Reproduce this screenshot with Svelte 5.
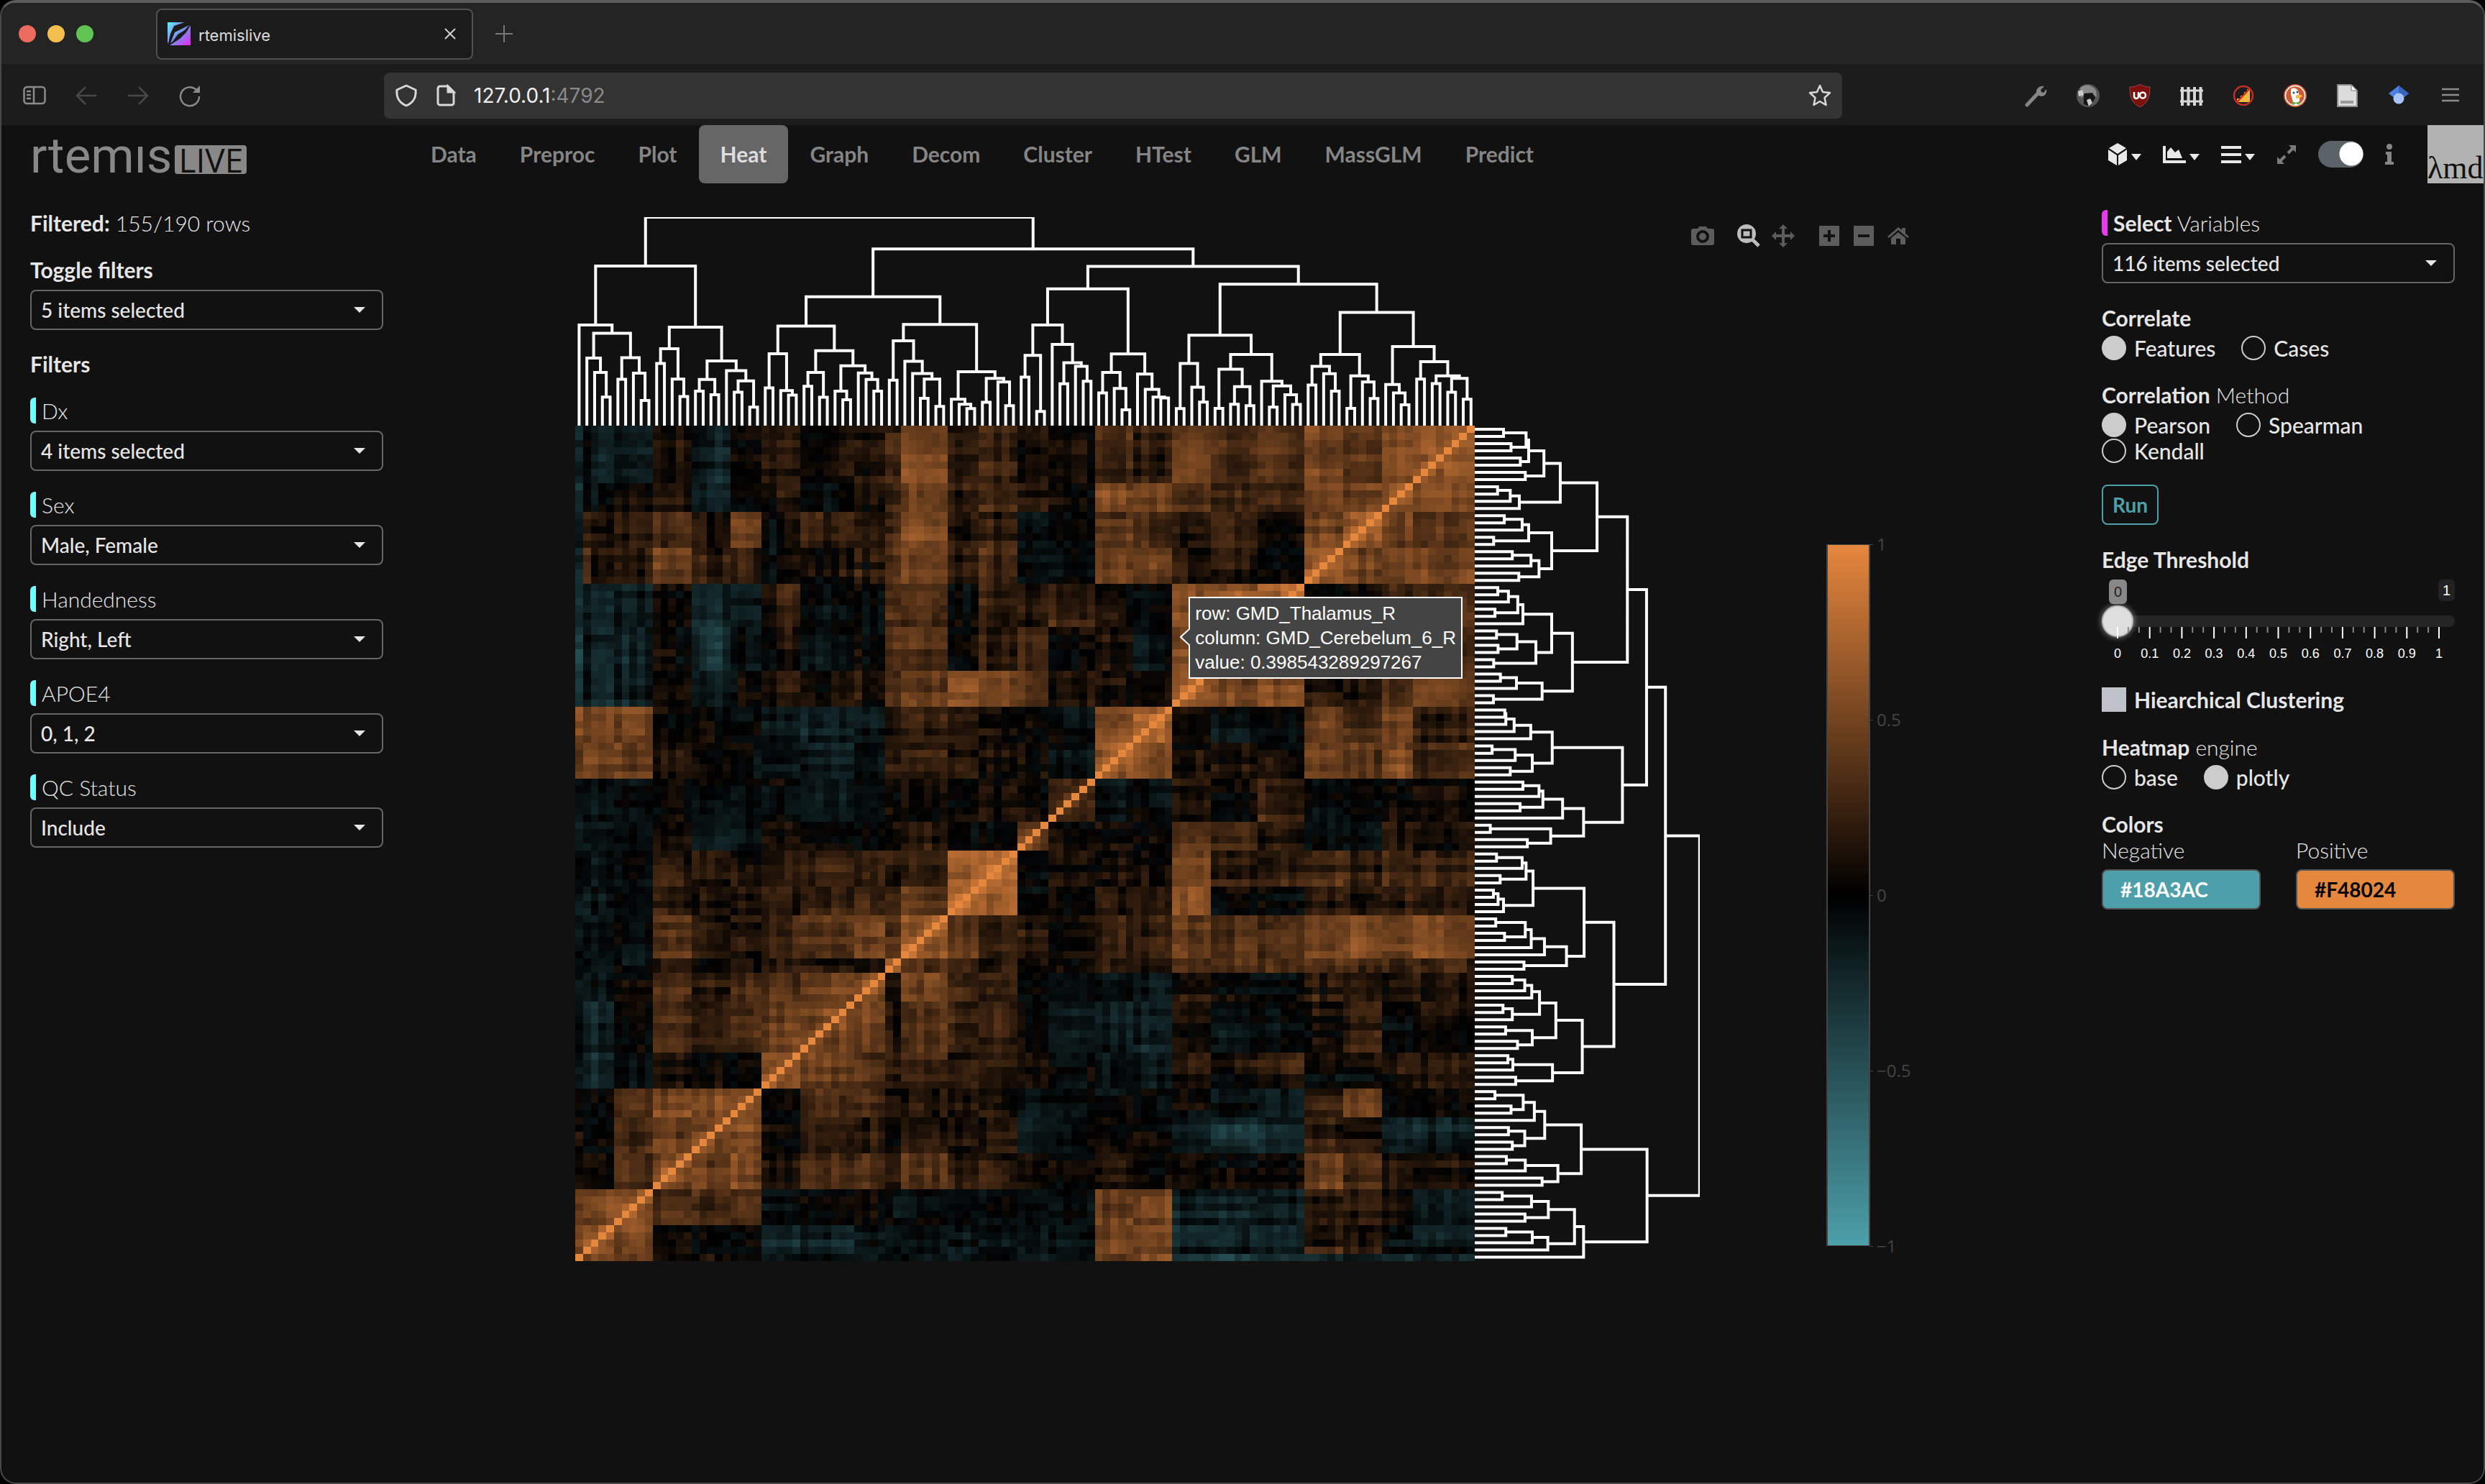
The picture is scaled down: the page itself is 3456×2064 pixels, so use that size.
<script>
  const navItems = ['Data', 'Preproc', 'Plot', 'Heat', 'Graph', 'Decom', 'Cluster', 'HTest', 'GLM', 'MassGLM', 'Predict'];
  let activeTab = $state('Heat');

  const filters = [
    { id: 'dx', label: 'Dx', value: '4 items selected' },
    { id: 'sex', label: 'Sex', value: 'Male, Female' },
    { id: 'hand', label: 'Handedness', value: 'Right, Left' },
    { id: 'apoe4', label: 'APOE4', value: '0, 1, 2' },
    { id: 'qc', label: 'QC Status', value: 'Include' },
  ];

  let correlate = $state('Features');
  let method = $state('Pearson');
  let engine = $state('plotly');
  let threshold = $state(0);
  let clustering = $state(true);
  let negative = $state('#18A3AC');
  let positive = $state('#F48024');

  const colorTicks = ['1', '0.5', '0', '−0.5', '−1'];
  const sliderTicks = Array.from({ length: 31 }, (_, i) => i);

  // Dendrogram: [height, left, right], 0 is a leaf. p() is a pair of leaves.
  const p = (h) => [h, 0, 0];
  const treeA = [665,
    [420, 0, [385,
      [282, 0, [222, 0, p(120)]],
      [284, p(194), [219, 0, p(106)]]]],
    [411,
      [321, p(260), [195, 0, p(122)]],
      [270, [193, p(145), p(130)], [230, 0, [187, p(140), p(78)]]]]];
  const treeC = [537,
    [415,
      [300, p(158), [147, 0, p(128)]],
      [313,
        [222, p(165), p(119)],
        [250, [145, 0, p(109)], [220, 0, [193, 0, p(145)]]]]],
    [422,
      [354, p(190), [269, 0, [218, 0, [195, p(115), p(81)]]]],
      [225, [111, 0, [90, 0, p(72)]], [198, p(98), [183, 0, p(84)]]]]];
  const treeD = [663,
    [570,
      [420, [293, p(203), p(60)], [339, 0, [263, p(175), [248, 0, p(186)]]]],
      [299, [222, p(137), [156, 0, p(67)]], [216, 0, [152, 0, [120, 0, p(116)]]]]],
    [589,
      [377,
        [260, p(72), [161, 0, p(99)]],
        [297,
          [236, p(73), [163, p(90), p(84)]],
          [186, 0, [166, p(78), [130, 0, p(89)]]]]],
      [472,
        [297, [248, p(170), [217, 0, p(145)]], [208, p(73), [183, 0, p(114)]]],
        [330,
          [172, 0, [137, 0, p(88)]],
          [267, p(195), [208, p(176), [198, p(140), p(111)]]]]]]];
  const tree = [868, treeA, [736, treeC, treeD]];
  const rootHeight = 868;
  const n = 116;

  function links(root) {
    const out = [];
    let leaf = 0;
    function walk(node) {
      if (node === 0) {
        leaf += 1;
        return { pos: leaf - 0.5, h: 0 };
      }
      const a = walk(node[1]);
      const b = walk(node[2]);
      out.push({ h: node[0], a, b });
      return { pos: (a.pos + b.pos) / 2, h: node[0] };
    }
    walk(root);
    return out;
  }

  const joins = links(tree);
  const colPath = joins
    .map(({ h, a, b }) => `M${a.pos} ${rootHeight - a.h}V${rootHeight - h}H${b.pos}V${rootHeight - b.h}`)
    .join('');
  const rowPath = joins
    .map(({ h, a, b }) => `M${a.h} ${n - a.pos}H${h}V${n - b.pos}H${b.h}`)
    .join('');

  // Mean correlation (x100) between groups of variables, upper triangle
  const bounds = [0, 1, 5, 10, 15, 20, 24, 29, 36, 40, 42, 48, 52, 57, 61, 67, 72, 77, 82, 88, 94, 99, 104, 108, 116];
  const means = [
    [60, 55, 50, 8, 0, 5, -12, -15, -12, -12, -15, -15, -12, -8, -10, 45, 50, -38, -38, -40, -20, -20, -28, -34],
    [60, 52, 0, -5, -5, -25, -22, -15, -8, -10, -14, -14, -10, -10, 45, 50, -28, -28, -30, 10, 5, -5, -18],
    [60, 30, 28, 28, -12, 2, 0, -5, -5, -5, -6, -4, -8, 42, 48, -15, -16, -18, 18, 15, 8, -12],
    [52, 45, 50, 12, 30, 33, 20, 36, 16, 18, 5, 0, 8, 5, 3, 0, 0, 38, 32, 12, 10],
    [55, 55, 0, 15, 20, 8, 13, 12, 15, -18, -2, 2, 5, -8, -26, -20, 18, 18, -12, -15],
    [58, 2, 30, 28, 10, 12, 10, 10, -12, -5, -4, -5, -5, -18, -18, 22, 38, -4, -6],
    [50, 42, 35, 12, 30, 16, 16, 3, -2, -14, -16, 18, 5, 16, 2, 4, 14, 16],
    [50, 50, 14, 38, 24, 22, 2, -10, -18, -20, 10, -8, -8, 10, 24, 2, 4],
    [58, 16, 44, 27, 24, 0, -8, -16, -18, 10, -4, -8, 12, 14, 5, 6],
    [60, 38, 16, 16, 8, 6, 12, 12, 36, 34, 30, 30, 28, 30, 32],
    [62, 38, 28, 14, 2, 16, 18, 42, 32, 32, 54, 54, 48, 50],
    [76, 68, 0, 5, 8, 6, 52, 0, -2, 16, 14, 16, 19],
    [76, 3, 8, 10, 6, 50, 12, 22, 26, 14, 24, 24],
    [36, 0, 3, 3, 33, 36, 14, -6, -4, 8, 12],
    [26, -8, -5, 12, 4, 26, -3, -3, 5, 8],
    [64, 58, 8, 10, 3, 44, 38, 52, 30],
    [66, 2, -8, -6, 42, 30, 44, 18],
    [64, 50, 50, 12, 14, 35, 42],
    [58, 60, 14, 20, 28, 30],
    [70, 2, 5, 26, 38],
    [58, 48, 52, 45],
    [64, 46, 44],
    [62, 56],
    [58],
  ];

  // Variables that stand out from their group against the last two clusters
  const bias = {
    1: 0.2, 2: -0.04, 5: 0.08, 6: -0.08, 10: 0.1, 17: -0.1, 18: -0.1, 21: 0.08,
    24: -0.05, 25: -0.1, 26: 0.05, 27: 0.08, 28: 0.05, 31: -0.08, 32: -0.08, 36: 0.08, 37: -0.06,
    52: 0.08, 53: 0.06,
  };

  function groupOf(i) {
    let g = 0;
    while (bounds[g + 1] <= i) g += 1;
    return g;
  }

  // Repeatable noise in -1..1
  function noise(a, b) {
    const s = Math.sin(a * 127.1 + b * 311.7) * 43758.5453;
    return (s - Math.floor(s)) * 2 - 1;
  }

  function corr(i, j) {
    if (i === j) return 1;
    const a = Math.min(i, j);
    const b = Math.max(i, j);
    const ga = groupOf(a);
    const gb = groupOf(b);
    let v = means[ga][gb - ga] / 100;
    v += 0.09 * noise(a, 200 + gb) + 0.09 * noise(b, 400 + ga) + 0.05 * noise(a, b + 7);
    if (b >= 77) v += bias[a] || 0;
    if (ga === gb && b - a < 2) v += 0.08;
    if (v < 0) v *= 0.85;
    return Math.max(-1, Math.min(0.92, v));
  }

  const low = [77, 160, 170];
  const high = [230, 135, 62];
  let canvas;

  $effect(() => {
    const ctx = canvas.getContext('2d');
    const img = ctx.createImageData(n, n);
    for (let row = 0; row < n; row++) {
      for (let col = 0; col < n; col++) {
        const v = corr(n - 1 - row, col);
        const c = v < 0 ? low : high;
        const k = (row * n + col) * 4;
        for (let ch = 0; ch < 3; ch++) img.data[k + ch] = c[ch] * Math.abs(v);
        img.data[k + 3] = 255;
      }
    }
    ctx.putImageData(img, 0, 0);
  });
</script>

{#snippet dropdown(id, value)}
  <div class="select-wrap">
    <select {id}><option>{value}</option></select>
    <svg class="select-caret" viewBox="0 0 16 8"><path d="M0 0h16L8 8z" /></svg>
  </div>
{/snippet}

{#snippet caret()}
  <svg class="menu-caret" viewBox="0 0 14 9"><path d="M0 0h14L7 9z" /></svg>
{/snippet}

<div class="window">
  <!-- Tab strip -->
  <div class="tabs">
    <div class="lights"><span class="red"></span><span class="yellow"></span><span class="green"></span></div>
    <div class="tab">
      <svg class="icon" viewBox="0 0 32 32">
        <defs>
          <linearGradient id="fav" x1="0" y1="0" x2="1" y2="1">
            <stop offset="0" stop-color="#5ff5f8" />
            <stop offset="0.5" stop-color="#7c8cf0" />
            <stop offset="1" stop-color="#ee22f4" />
          </linearGradient>
        </defs>
        <path d="M0 0h24L9 5 4 16 1 30 0 27z" fill="url(#fav)" />
        <path d="M30 4L10 14 4 29 16 20z" fill="url(#fav)" />
        <path d="M27 9L14 17 7 27 19 19z" fill="#1b1b1b" />
        <path d="M32 4v28H3l14-9 9-9z" fill="url(#fav)" />
      </svg>
      <span class="tab-title">rtemislive</span>
      <button class="bare" aria-label="Close tab">
        <svg width="16" height="16" viewBox="0 0 16 16"><path d="M1 1l14 14M15 1L1 15" stroke="#d0d0d0" stroke-width="2" /></svg>
      </button>
    </div>
    <button class="bare new-tab" aria-label="New tab">
      <svg width="24" height="24" viewBox="0 0 24 24"><path d="M12 0v24M0 12h24" stroke="#777" stroke-width="2" /></svg>
    </button>
  </div>

  <!-- Address bar -->
  <div class="toolbar">
    <div class="history">
      <svg class="icon" viewBox="0 0 32 32" fill="none" stroke="#8a8a8a" stroke-width="2.5">
        <rect x="1.5" y="4" width="29" height="23" rx="4" /><path d="M15 4v23M5 10h6M5 15h6M5 20h6" />
      </svg>
      <svg class="icon" viewBox="0 0 32 32" fill="none" stroke="#484848" stroke-width="2.5"><path d="M30 16H3M15 4L3 16l12 12" /></svg>
      <svg class="icon" viewBox="0 0 32 32" fill="none" stroke="#484848" stroke-width="2.5"><path d="M2 16h27M17 4l12 12-12 12" /></svg>
      <svg class="icon" viewBox="0 0 32 32" fill="none" stroke="#8a8a8a" stroke-width="2.5">
        <path d="M29 17a13 13 0 1 1-5-10l3 3" /><path d="M30 2v10H20z" fill="#8a8a8a" stroke="none" />
      </svg>
    </div>
    <div class="address">
      <svg class="icon" viewBox="0 0 32 32" fill="none" stroke="#d8d8d8" stroke-width="3">
        <path d="M16 2L29 8c1 10-2 17-13 22C5 25 2 18 3 8z" stroke-linejoin="round" />
      </svg>
      <svg class="icon" viewBox="0 0 32 32" fill="none" stroke="#d8d8d8" stroke-width="3">
        <path d="M8 3h11l8 8v15a3 3 0 0 1-3 3H8a3 3 0 0 1-3-3V6a3 3 0 0 1 3-3z" /><path d="M19 3v8h8z" fill="#d8d8d8" />
      </svg>
      <span class="url">127.0.0.1<span class="port">:4792</span></span>
      <svg class="icon" viewBox="0 0 32 32" fill="none" stroke="#d8d8d8" stroke-width="2.5" stroke-linejoin="round">
        <path d="M16 2l4 9 10 1-7.500 7 2 10L16 24l-8.500 5 2-10L2 12l10-1z" />
      </svg>
    </div>
    <div class="extensions">
      <svg class="icon" viewBox="0 0 32 32">
        <path d="M3 29L18 13" stroke="#858585" stroke-width="5" stroke-linecap="round" />
        <path d="M27 3l-5 5 1 3 3 1 4-5c1 5-1 9-6 10-5 0-8-3-8-7 1-5 5-8 11-7z" fill="#858585" />
      </svg>
      <svg class="icon" viewBox="0 0 32 32">
        <circle cx="16" cy="16" r="16" fill="#555" />
        <path d="M5 5c7-6 17-4 22 4l1 9-7-5-10 2-5 5z" fill="#8a8a8a" />
        <path d="M10 13l12-1 4 7-7 12-9-3z" fill="#161616" />
        <path d="M2 10l6-2 2 7-7 2zM14 22l5-2 3 6-5 5z" fill="#ccc" />
      </svg>
      <svg class="icon" viewBox="0 0 32 32">
        <path d="M16 0c5 3 9 4 14 4 0 15-3 22-14 28C5 26 2 19 2 4c5 0 9-1 14-4z" fill="#7d0f0d" stroke="#9a4a48" />
        <path d="M8 11v6a3 3 0 0 0 6 0v-6" fill="none" stroke="#fff" stroke-width="2.5" />
        <circle cx="20" cy="15.5" r="4" fill="none" stroke="#fff" stroke-width="2.5" />
      </svg>
      <svg class="icon" viewBox="0 0 32 32" stroke="#d6d6d6" fill="none">
        <path d="M3 4v26M11.500 4v26M20 4v26M28.500 4v26" stroke-width="4" /><path d="M0 9h32M0 24h32" stroke-width="3" />
      </svg>
      <svg class="icon" viewBox="0 0 32 32">
        <path d="M7 25v-5h5v-4h5v-5h4V7h4v18z" fill="#f2b840" />
        <circle cx="16" cy="16" r="13" fill="none" stroke="#c22e22" stroke-width="2.5" />
        <path d="M25 6L7 25" stroke="#c22e22" stroke-width="2.5" />
      </svg>
      <svg class="icon" viewBox="0 0 32 32">
        <circle cx="16" cy="16" r="16" fill="#ce5a35" /><circle cx="16" cy="16" r="13.5" fill="none" stroke="#fff" stroke-width="1.5" />
        <path d="M10 7c4-3 10-1 11 5l1 8v9c-4 1-7 0-8-1L10 14z" fill="#fff" />
        <path d="M17 16c4-2 7-1 9 0-1 3-5 4-9 4z" fill="#f3bc3e" />
        <circle cx="14" cy="12" r="1.5" fill="#2b4f7b" /><circle cx="19" cy="11" r="1.5" fill="#2b4f7b" />
        <path d="M12 24l5 2 5-2v5l-5-2-5 2z" fill="#5fae46" />
      </svg>
      <svg class="icon" viewBox="0 0 32 32">
        <path d="M3 1h19l8 8v22H3z" fill="#dcdcdc" stroke="#8b8b8b" stroke-width="2" />
        <path d="M22 1l8 8h-8z" fill="#fff" stroke="#777" /><path d="M7 23h18v4H7z" fill="#9a9a9a" />
      </svg>
      <svg class="icon" viewBox="0 0 32 32">
        <path d="M16 2L30 13 16 24 2 13z" fill="#4c7fe0" /><path d="M16 2L30 13 16 20z" fill="#3563bd" />
        <circle cx="16" cy="20" r="7.5" fill="#a8c5fb" />
      </svg>
      <svg class="icon" viewBox="0 0 32 32" stroke="#8a8a8a" stroke-width="2.5"><path d="M4 7h24M4 15h24M4 23h24" /></svg>
    </div>
  </div>

  <!-- App navbar -->
  <header class="navbar">
    <a class="logo" href="#home">rtemıs<span>LIVE</span></a>
    <nav>
      {#each navItems as item}
        <a href="#{item}" class:active={item === activeTab} onclick={() => (activeTab = item)}>{item}</a>
      {/each}
    </nav>
    <div class="menus">
      <button class="bare" aria-label="Models">
        <svg width="28" height="32" viewBox="0 0 28 32" fill="#e8e8e8">
          <path d="M14 0l12 7-12 8L2 7z" /><path d="M1 9l12 8v14L1 24zM27 9l-12 8v14l12-7z" />
        </svg>
        {@render caret()}
      </button>
      <button class="bare" aria-label="Charts">
        <svg width="32" height="26" viewBox="0 0 32 26" fill="#e8e8e8">
          <path d="M0 1h4v20h28v4H0z" /><path d="M6 18v-9l5-6 6 7 5-4 5 12z" />
        </svg>
        {@render caret()}
      </button>
      <button class="bare" aria-label="Menu">
        <svg width="28" height="26" viewBox="0 0 28 26" stroke="#e8e8e8" stroke-width="4"><path d="M0 3h28M0 13h28M0 23h28" /></svg>
        {@render caret()}
      </button>
      <svg width="28" height="28" viewBox="0 0 28 28" fill="#7c7c7c" stroke="#7c7c7c" stroke-width="4">
        <path d="M16 12l7-7M12 16l-7 7" /><path d="M17 1h10v10zM1 17v10h10z" stroke="none" />
      </svg>
      <input class="theme-switch" type="checkbox" checked aria-label="Dark theme" />
      <svg class="info" width="12" height="30" viewBox="0 0 12 30" fill="#858585">
        <circle cx="6" cy="4" r="4" /><path d="M1 11h8v14h3v4H0v-4h3V15H1z" />
      </svg>
      <a class="brand" href="#lambdamd">λmd</a>
    </div>
  </header>

  <main>
    <aside class="panel">
      <p class="line"><b>Filtered:</b> 155/190 rows</p>
      <div class="field">
        <label class="line" for="toggle"><b>Toggle filters</b></label>
        {@render dropdown('toggle', '5 items selected')}
      </div>
      <h2 class="line">Filters</h2>
      {#each filters as f}
        <div class="field">
          <label class="line marked" for={f.id}>{f.label}</label>
          {@render dropdown(f.id, f.value)}
        </div>
      {/each}
    </aside>

    <section class="chart">
      <div class="clustergram">
        <svg class="dendrogram" viewBox="0 0 {n} {rootHeight}" preserveAspectRatio="none"><path d={colPath} /></svg>
        <div class="heatmap">
          <canvas bind:this={canvas} width={n} height={n}></canvas>
          <div class="tooltip">row: GMD_Thalamus_R<br />column: GMD_Cerebelum_6_R<br />value: 0.398543289297267
            <svg class="pointer" viewBox="0 0 14 24"><path d="M14 0L1 12l13 12" /></svg>
          </div>
        </div>
        <svg class="dendrogram rows" viewBox="0 0 {rootHeight} {n}" preserveAspectRatio="none"><path d={rowPath} /></svg>
      </div>

      <div class="legend">
        <div class="colorbar"></div>
        <div class="color-ticks">
          {#each colorTicks as t}<span>{t}</span>{/each}
        </div>
      </div>

      <div class="modebar">
        <button class="bare" aria-label="Download plot">
          <svg class="icon" viewBox="0 0 32 32" fill="#5c5c5c" fill-rule="evenodd">
            <path d="M3 6h6l2-3h10l2 3h6a3 3 0 0 1 3 3v17a3 3 0 0 1-3 3H3a3 3 0 0 1-3-3V9a3 3 0 0 1 3-3zM16 8a9 9 0 1 0 0 18 9 9 0 0 0 0-18zM16 12a5 5 0 1 1 0 10 5 5 0 0 1 0-10z" />
          </svg>
        </button>
        <div class="mode-group">
          <button class="bare" aria-label="Zoom">
            <svg class="icon" viewBox="0 0 32 32">
              <path d="M21 21l9 9" stroke="#bdbdbd" stroke-width="5" /><circle cx="13" cy="13" r="13" fill="#bdbdbd" />
              <path d="M7 8h12v10H7z" fill="none" stroke="#111" stroke-width="3" />
            </svg>
          </button>
          <button class="bare" aria-label="Pan">
            <svg class="icon" viewBox="0 0 32 32" fill="#5c5c5c">
              <path d="M16 0l6 6h-4v8h8v-4l6 6-6 6v-4h-8v8h4l-6 6-6-6h4v-8H6v4l-6-6 6-6v4h8V6h-4z" />
            </svg>
          </button>
        </div>
        <div class="mode-group">
          <button class="bare" aria-label="Zoom in">
            <svg class="icon" viewBox="0 0 32 32"><path d="M2 2h28v28H2z" fill="#5c5c5c" /><path d="M16 8v16M8 16h16" stroke="#111" stroke-width="4" /></svg>
          </button>
          <button class="bare" aria-label="Zoom out">
            <svg class="icon" viewBox="0 0 32 32"><path d="M2 2h28v28H2z" fill="#5c5c5c" /><path d="M8 16h16" stroke="#111" stroke-width="4" /></svg>
          </button>
          <button class="bare" aria-label="Reset axes">
            <svg class="icon" viewBox="0 0 32 32" fill="#5c5c5c">
              <path d="M16 4l5 4V5h5v8l5 4-2 2-13-11L3 19l-2-2z" /><path d="M16 11l10 8v9h-7v-8h-6v8H6v-9z" />
            </svg>
          </button>
        </div>
      </div>
    </section>

    <aside class="panel controls">
      <div class="field">
        <label class="line marked pink" for="vars"><b>Select</b> Variables</label>
        {@render dropdown('vars', '116 items selected')}
      </div>

      <fieldset>
        <legend class="line"><b>Correlate</b></legend>
        <div class="options">
          {#each ['Features', 'Cases'] as o}
            <label><input type="radio" name="correlate" value={o} bind:group={correlate} />{o}</label>
          {/each}
        </div>
      </fieldset>

      <fieldset>
        <legend class="line"><b>Correlation</b> Method</legend>
        <div class="options">
          {#each ['Pearson', 'Spearman', 'Kendall'] as o}
            <label><input type="radio" name="method" value={o} bind:group={method} />{o}</label>
          {/each}
        </div>
      </fieldset>

      <button class="run">Run</button>

      <div class="slider">
        <label class="line" for="threshold"><b>Edge Threshold</b></label>
        <div class="slider-badges"><span class="current">{threshold}</span><span>1</span></div>
        <input id="threshold" type="range" min="0" max="1" step="0.01" bind:value={threshold} />
        <svg class="slider-ticks">
          {#each sliderTicks as t}
            <line class:major={t % 3 === 0} x1="{t / 0.3}%" x2="{t / 0.3}%" y1="0" y2={t % 3 ? 8 : 16} />
            {#if t % 3 === 0}<text x="{t / 0.3}%" y="43">{t / 30}</text>{/if}
          {/each}
        </svg>
      </div>

      <label class="check"><input type="checkbox" bind:checked={clustering} /><b>Hiearchical Clustering</b></label>

      <fieldset>
        <legend class="line"><b>Heatmap</b> engine</legend>
        <div class="options">
          {#each ['base', 'plotly'] as o}
            <label><input type="radio" name="engine" value={o} bind:group={engine} />{o}</label>
          {/each}
        </div>
      </fieldset>

      <div>
        <h2 class="line">Colors</h2>
        <div class="colors">
          <div class="color">
            <label class="line" for="negative">Negative</label>
            <input id="negative" class="negative" type="text" bind:value={negative} />
          </div>
          <div class="color">
            <label class="line" for="positive">Positive</label>
            <input id="positive" class="positive" type="text" bind:value={positive} />
          </div>
        </div>
      </div>
    </aside>
  </main>
</div>

<style>
  :global(body) {
    background: #000;
  }

  .window {
    box-sizing: border-box;
    min-height: 100vh;
    border: 2px solid #484848;
    border-top: 4px solid #5c5c5c;
    border-radius: 22px;
    overflow: hidden;
    background: #111;
    color: #e6e6e6;
    font: 300 30px/36px Lato, sans-serif;
  }

  b {
    font-weight: 700;
  }

  .bare {
    display: flex;
    align-items: center;
    padding: 0;
    border: 0;
    background: none;
  }

  .icon {
    display: block;
    flex: none;
    width: 32px;
    height: 32px;
  }

  /* Browser chrome */
  .tabs {
    display: flex;
    align-items: center;
    height: 86px;
    background: #242424;
    box-sizing: border-box;
    padding-left: 24px;
    font-family: Inter, sans-serif;
  }

  .lights {
    display: flex;
    gap: 16px;
    margin-right: 87px;
  }

  .lights span {
    width: 24px;
    height: 24px;
    border-radius: 50%;
  }

  .red { background: #ec6a5e; }
  .yellow { background: #f4bf4f; }
  .green { background: #61c554; }

  .tab {
    box-sizing: border-box;
    display: flex;
    align-items: center;
    gap: 11px;
    width: 441px;
    height: 71px;
    padding: 0 22px 0 14px;
    border: 2px solid #505050;
    border-radius: 8px;
    background: #1b1b1b;
  }

  .tab-title {
    flex: 1;
    padding-top: 3px;
    color: #dcdcdc;
    font-size: 22px;
    font-weight: 400;
  }

  .new-tab {
    margin-left: 31px;
  }

  .toolbar {
    display: flex;
    align-items: center;
    height: 84px;
    padding: 0 30px;
    border-top: 1px solid #171717;
    box-sizing: border-box;
    background: #1c1c1c;
  }

  .history {
    display: flex;
    gap: 40px;
    width: 502px;
  }

  .address {
    flex: 1;
    display: flex;
    align-items: center;
    gap: 23px;
    box-sizing: border-box;
    height: 64px;
    max-width: 2028px;
    padding: 0 15px;
    border-radius: 8px;
    background: #333;
  }

  .url {
    flex: 1;
    color: #f0f0f0;
    font: 400 28px/32px Inter, sans-serif;
  }

  .port {
    color: #8a8a8a;
  }

  .extensions {
    display: flex;
    gap: 40px;
    margin-left: auto;
  }

  /* Navbar */
  .navbar {
    display: flex;
    height: 81px;
    padding-left: 40px;
  }

  .logo {
    display: flex;
    align-items: flex-end;
    gap: 4px;
    width: 527px;
    color: #888;
    font: 400 69px/76px Roboto, sans-serif;
    text-decoration: none;
  }

  .logo span {
    margin-bottom: 13px;
    padding: 0 5px;
    border-radius: 4px;
    background: #888;
    color: #111;
    font: 400 46px/40px "Open Sans", sans-serif;
  }

  nav {
    display: flex;
  }

  nav a {
    padding: 22px 30px 23px;
    border-radius: 8px;
    color: #858585;
    font-size: 30px;
    font-weight: 700;
    text-decoration: none;
  }

  nav a.active {
    background: #666;
    color: #ddd;
  }

  .menus {
    display: flex;
    align-items: center;
    gap: 30px;
    margin-left: auto;
  }

  .menus .bare {
    gap: 5px;
  }

  .menu-caret {
    width: 14px;
    height: 9px;
    margin-top: 8px;
    fill: #e8e8e8;
  }

  .theme-switch {
    appearance: none;
    width: 63px;
    height: 37px;
    margin: 0;
    border-radius: 20px;
    background: radial-gradient(circle at 46px 18px, #fff 16px, #5b6268 17px);
  }

  .brand {
    align-self: stretch;
    width: 78px;
    margin-left: 17px;
    background: #b2b2b2;
    color: #111;
    font: 400 44px/120px "Liberation Serif", serif;
    overflow: hidden;
    text-decoration: none;
  }

  /* Page */
  main {
    display: grid;
    grid-template-columns: 491px 1fr 491px;
    padding: 37px 40px 40px 40px;
  }

  .panel {
    display: flex;
    flex-direction: column;
    gap: 29px;
  }

  .line {
    margin: 0;
    padding: 0;
    height: 36px;
    font-size: 30px;
    line-height: 36px;
  }

  h2.line {
    font-weight: 700;
  }

  .field {
    display: flex;
    flex-direction: column;
    gap: 10px;
  }

  .marked {
    padding-left: 8px;
    border-left: 8px solid #74fbfd;
    border-radius: 6px 0 0 6px;
  }

  .pink {
    border-left-color: #e83bf0;
  }

  .select-wrap {
    position: relative;
  }

  select {
    appearance: none;
    display: block;
    box-sizing: border-box;
    width: 100%;
    height: 56px;
    padding: 0 13px;
    border: 2px solid #666;
    border-radius: 8px;
    background: none;
    color: #e6e6e6;
    font: 500 28px/36px Lato, sans-serif;
  }

  .select-caret {
    position: absolute;
    top: 24px;
    right: 25px;
    width: 16px;
    height: 8px;
    fill: #e6e6e6;
  }

  /* Chart */
  .chart {
    position: relative;
    display: flex;
    padding: 10px 200px 0 267px;
  }

  .clustergram {
    flex: 1;
    display: grid;
    grid-template-columns: 4fr 1fr;
    grid-template-rows: 1fr 4fr;
    height: 1452px;
  }

  .dendrogram {
    width: 100%;
    height: 100%;
    min-height: 0;
    overflow: hidden;
  }

  .dendrogram path {
    fill: none;
    stroke: #fff;
    stroke-width: 4;
    vector-effect: non-scaling-stroke;
  }

  .heatmap {
    grid-row: 2;
    position: relative;
    min-height: 0;
  }

  canvas {
    display: block;
    width: 100%;
    height: 100%;
    image-rendering: pixelated;
  }

  .rows {
    grid-row: 2;
  }

  .tooltip {
    position: absolute;
    top: 238px;
    left: 68.2%;
    padding: 4px 7px;
    border: 2px solid #fff;
    background: #444;
    color: #fff;
    font: 400 26px/34px "Liberation Sans", sans-serif;
    white-space: nowrap;
  }

  .pointer {
    position: absolute;
    top: 42px;
    left: -14px;
    width: 14px;
    height: 24px;
    fill: #444;
    stroke: #fff;
    stroke-width: 2;
  }

  .legend {
    display: flex;
    width: 183px;
    height: 976px;
    margin: 455px 0 0 176px;
  }

  .colorbar {
    box-sizing: border-box;
    width: 61px;
    border: 2px solid #444;
    border-width: 1px 2px;
    background: linear-gradient(#e6873e, #000 50%, #4da0aa);
  }

  .color-ticks {
    display: flex;
    flex-direction: column;
    justify-content: space-between;
    margin: -16px 0;
    color: #444;
    font: 400 24px/32px "Open Sans", sans-serif;
  }

  .color-ticks span {
    display: flex;
    align-items: center;
    gap: 5px;
  }

  .color-ticks span::before {
    content: "";
    width: 4px;
    height: 1px;
    background: #444;
  }

  .modebar {
    position: absolute;
    top: 20px;
    right: 267px;
    display: flex;
    gap: 32px;
  }

  .mode-group {
    display: flex;
    gap: 16px;
  }

  /* Controls */
  fieldset {
    margin: 0;
    padding: 0;
    border: 0;
  }

  .controls {
    gap: 30px;
  }

  .options {
    display: flex;
    flex-wrap: wrap;
    gap: 2px 36px;
    padding-top: 7px;
  }

  .options label,
  .check {
    display: flex;
    align-items: center;
    gap: 11px;
    height: 34px;
    font-weight: 500;
  }

  .check {
    height: 36px;
  }

  .options input {
    appearance: none;
    box-sizing: border-box;
    width: 34px;
    height: 34px;
    margin: 0;
    border: 2px solid #ccc;
    border-radius: 50%;
  }

  .options input:checked {
    background: #ccc;
  }

  .run {
    align-self: flex-start;
    height: 56px;
    padding: 0 13px;
    border: 2px solid #4da0aa;
    border-radius: 8px;
    background: none;
    color: #4da0aa;
    font: 700 28px/36px Lato, sans-serif;
  }

  .slider {
    display: flex;
    flex-direction: column;
  }

  .slider-badges {
    display: flex;
    justify-content: space-between;
    align-items: flex-start;
    margin: 10px 0 0 10px;
    font: 400 20px/30px "Liberation Sans", sans-serif;
  }

  .slider-badges span {
    padding: 0 6px;
    border-radius: 6px;
    background: #222;
    color: #fff;
  }

  .slider-badges .current {
    padding: 2px 7px;
    background: #888;
    color: #222;
  }

  .slider input {
    appearance: none;
    width: 100%;
    height: 16px;
    margin: 16px 0 0;
    border-radius: 8px;
    background: #252525;
  }

  .slider input::-webkit-slider-thumb {
    appearance: none;
    width: 44px;
    height: 44px;
    border: 2px solid #bbb;
    border-radius: 50%;
    background: #dedede;
    box-shadow: 0 0 8px #999;
  }

  .slider-ticks {
    height: 53px;
    width: calc(100% - 44px);
    margin: 0 22px;
    overflow: visible;
  }

  .slider-ticks line {
    stroke: #888;
    stroke-width: 2;
  }

  .slider-ticks line.major {
    stroke: #fff;
  }

  .slider-ticks text {
    fill: #fff;
    font: 400 18px "Liberation Sans", sans-serif;
    text-anchor: middle;
  }

  .check input {
    appearance: none;
    width: 34px;
    height: 34px;
    margin: 0;
    border: 2px solid #bfc3c9;
    box-sizing: border-box;
  }

  .check input:checked {
    background: #bfc3c9;
  }

  .colors {
    display: grid;
    grid-template-columns: 1fr 1fr;
    gap: 49px;
  }

  .color {
    display: flex;
    flex-direction: column;
    gap: 9px;
  }

  .color input {
    box-sizing: border-box;
    width: 100%;
    height: 56px;
    padding: 0 24px;
    border: 2px solid #555;
    border-radius: 8px;
    font: 700 28px/36px Lato, sans-serif;
  }

  .negative {
    background: #4da0aa;
    color: #fff;
  }

  .positive {
    background: #e6873e;
    color: #000;
  }
</style>
